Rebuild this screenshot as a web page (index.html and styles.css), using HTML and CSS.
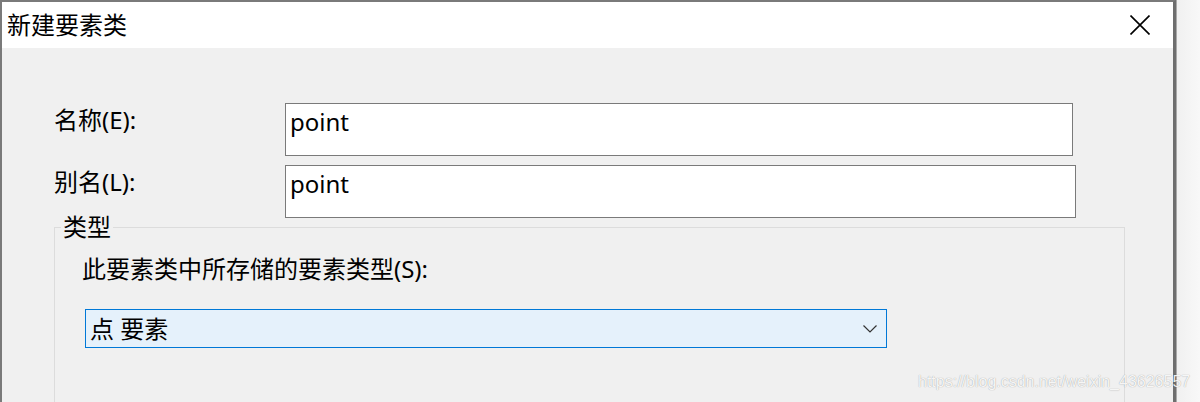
FILE: index.html
```html
<!DOCTYPE html>
<html lang="zh-CN">
<head>
<meta charset="utf-8">
<title>新建要素类</title>
<link rel="stylesheet" href="styles.css">
</head>
<body>
<div class="desktop">
  <div class="dialog">
    <div class="titlebar">
      <span class="title">新建要素类</span>
      <button class="close" type="button" aria-label="关闭">
        <svg width="20" height="20" viewBox="0 0 20 20"><path d="M0.5 0.5 L19.5 19.5 M19.5 0.5 L0.5 19.5" stroke="#000" stroke-width="1.6" fill="none"/></svg>
      </button>
    </div>
    <div class="content">
      <div class="form-grid">
        <label class="label">名称(E):</label>
        <div class="textbox">point</div>
        <label class="label">别名(L):</label>
        <div class="textbox wide">point</div>
      </div>
      <fieldset class="group">
        <legend class="legend">类型</legend>
        <div class="group-body">
          <div class="group-label">此要素类中所存储的要素类型(S):</div>
          <div class="select">
            <span class="select-text">点 要素</span>
            <svg class="chevron" width="14" height="8" viewBox="0 0 14 8"><path d="M0.5 0.5 L7 7 L13.5 0.5" stroke="#333" stroke-width="1.2" fill="none"/></svg>
          </div>
        </div>
      </fieldset>
    </div>
  </div>
  <div class="watermark">https://blog.csdn.net/weixin_43626557</div>
</div>
</body>
</html>
```

FILE: styles.css
```css
* { box-sizing: border-box; }
html, body { margin: 0; padding: 0; }
body {
  font-family: "Noto Sans", "Noto Sans CJK SC", sans-serif;
  color: #000;
}
.desktop {
  position: relative;
  width: 1200px;
  height: 402px;
  overflow: hidden;
  display: flex;
  background: linear-gradient(to right, #e4e4e4 0, #f1f1f1 1179px, #f8f8f8 1200px);
}
.dialog {
  width: 1176px;
  height: 440px;
  flex: none;
  border-top: 2px solid #7a7a7a;
  border-left: 2px solid #7a7a7a;
  border-right: 3px solid #6e6e6e;
  box-shadow: 1px 0 0 #a9a9a9;
  display: flex;
  flex-direction: column;
  background: #f0f0f0;
}
.titlebar {
  height: 46px;
  background: #fff;
  display: flex;
  align-items: center;
  justify-content: space-between;
  padding-left: 5px;
}
.title {
  font-size: 24px;
  line-height: 24px;
}
.close {
  width: 67px;
  height: 46px;
  border: 0;
  background: transparent;
  padding: 0;
  display: flex;
  align-items: center;
  justify-content: center;
}
.close svg { display: block; }
.content {
  padding: 55px 0 0 52px;
  font-size: 24px;
}
.form-grid {
  display: grid;
  grid-template-columns: 231px auto;
  row-gap: 9px;
  justify-items: start;
}
.label {
  line-height: 24px;
  padding-top: 5px;
}
.textbox {
  width: 788px;
  height: 53px;
  background: #fff;
  border: 1px solid #7a7a7a;
  padding: 6px 4px 0 4px;
  line-height: 24px;
}
.textbox.wide { width: 791px; }
.group {
  margin: 0;
  width: 1071px;
  border: 1px solid #dcdcdc;
  padding: 0 0 60px 0;
  min-width: 0;
}
.legend {
  margin-left: 6px;
  padding: 0 2px;
  line-height: 18px;
}
.group-body {
  padding-left: 27px;
}
.group-label {
  margin-top: 21px;
  line-height: 24px;
}
.select {
  margin-top: 28px;
  margin-left: 3px;
  width: 802px;
  height: 39px;
  border: 1px solid #0078d7;
  background: #e5f1fb;
  display: flex;
  align-items: center;
  justify-content: space-between;
  padding: 0 9px 0 4px;
}
.select-text { line-height: 24px; }
.chevron { display: block; }
.watermark {
  position: absolute;
  left: 918px;
  top: 374px;
  font-family: "Liberation Sans", Arial, sans-serif;
  font-size: 16px;
  line-height: 16px;
  color: rgba(255, 255, 255, 0.92);
  text-shadow: 0 0 1px rgba(0, 0, 0, 0.4);
  white-space: nowrap;
}
```
